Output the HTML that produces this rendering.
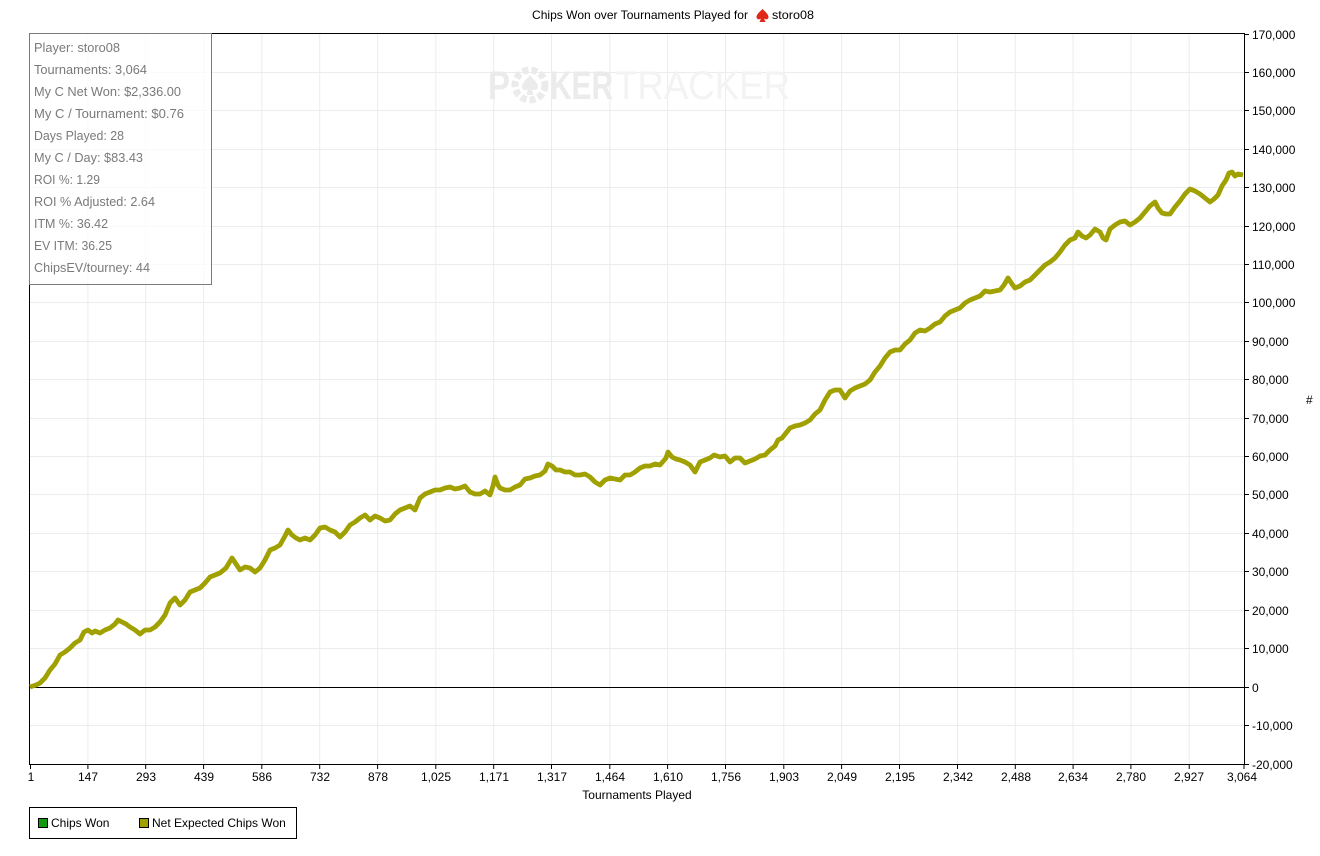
<!DOCTYPE html>
<html><head><meta charset="utf-8"><style>
html,body{margin:0;padding:0;background:#fff;}
svg{display:block;}
text{font-family:"Liberation Sans",Arial,sans-serif;}
.st{font-family:"Liberation Sans",sans-serif;font-size:12.5px;fill:#7a7a7a;}
</style></head><body>
<svg width="1320" height="856" viewBox="0 0 1320 856" xmlns="http://www.w3.org/2000/svg">
<rect width="1320" height="856" fill="#fff"/>
<text x="532" y="19" font-size="12" fill="#000" textLength="216" lengthAdjust="spacingAndGlyphs">Chips Won over Tournaments Played for</text>
<path d="M762.5 9 C759 12.5 756.5 14.5 756.5 17 C756.5 19.5 759 20 761 18.5 L759.5 22 L765.5 22 L764 18.5 C766 20 768.5 19.5 768.5 17 C768.5 14.5 766 12.5 762.5 9Z" fill="#e02818"/>
<text x="772" y="19" font-size="12" fill="#000" textLength="42" lengthAdjust="spacingAndGlyphs">storo08</text>
<g stroke="#ececec" stroke-width="1">
<path d="M87.9 34V764M145.7 34V764M203.6 34V764M261.8 34V764M319.7 34V764M377.6 34V764M435.8 34V764M493.7 34V764M551.5 34V764M609.8 34V764M667.6 34V764M725.5 34V764M783.8 34V764M841.6 34V764M899.5 34V764M957.5 34V764M1015.3 34V764M1073.1 34V764M1130.9 34V764M1189.2 34V764"/>
<path d="M30 725.5H1244M30 648.5H1244M30 610.5H1244M30 571.5H1244M30 533.5H1244M30 494.5H1244M30 456.5H1244M30 418.5H1244M30 379.5H1244M30 341.5H1244M30 302.5H1244M30 264.5H1244M30 226.5H1244M30 187.5H1244M30 149.5H1244M30 110.5H1244M30 72.5H1244"/>
</g>
<g fill="#ebebeb" font-size="40" font-weight="bold">
<text x="488" y="99" textLength="22" lengthAdjust="spacingAndGlyphs">P</text>
<circle cx="530" cy="85" r="15" fill="none" stroke="#ebebeb" stroke-width="7" stroke-dasharray="6 3"/>
<path d="M530 75 C526 80 522 83 522 87 C522 90 526 91 528 89 L526.5 95 L533.5 95 L532 89 C534 91 538 90 538 87 C538 83 534 80 530 75Z"/>
<text x="550" y="99" textLength="63" lengthAdjust="spacingAndGlyphs">KER</text>
<text x="615" y="99" font-weight="normal" fill="#f3f3f3" textLength="175" lengthAdjust="spacingAndGlyphs">TRACKER</text>
</g>
<path d="M30.5 33.5H1244.5V764" fill="none" stroke="#000" stroke-width="1"/>
<path d="M29.5 33V764.5H1244.5" fill="none" stroke="#000" stroke-width="1"/>
<path d="M30 687.5H1244" stroke="#000" stroke-width="1"/>
<g stroke="#000" stroke-width="1">
<path d="M1244 34.5h5M1244 72.5h5M1244 110.5h5M1244 149.5h5M1244 187.5h5M1244 226.5h5M1244 264.5h5M1244 302.5h5M1244 341.5h5M1244 379.5h5M1244 418.5h5M1244 456.5h5M1244 494.5h5M1244 533.5h5M1244 571.5h5M1244 610.5h5M1244 648.5h5M1244 687.5h5M1244 725.5h5M1244 764.5h5"/>
<path d="M30.5 764v5M87.9 764v5M145.7 764v5M203.6 764v5M261.8 764v5M319.7 764v5M377.6 764v5M435.8 764v5M493.7 764v5M551.5 764v5M609.8 764v5M667.6 764v5M725.5 764v5M783.8 764v5M841.6 764v5M899.5 764v5M957.5 764v5M1015.3 764v5M1073.1 764v5M1130.9 764v5M1189.2 764v5M1244 764v5"/>
</g>
<g font-size="12" fill="#000">
<text x="1252" y="39">170,000</text><text x="1252" y="77">160,000</text><text x="1252" y="115">150,000</text><text x="1252" y="154">140,000</text><text x="1252" y="192">130,000</text><text x="1252" y="231">120,000</text><text x="1252" y="269">110,000</text><text x="1252" y="307">100,000</text><text x="1252" y="346">90,000</text><text x="1252" y="384">80,000</text><text x="1252" y="423">70,000</text><text x="1252" y="461">60,000</text><text x="1252" y="499">50,000</text><text x="1252" y="538">40,000</text><text x="1252" y="576">30,000</text><text x="1252" y="615">20,000</text><text x="1252" y="653">10,000</text><text x="1252" y="692">0</text><text x="1252" y="730">-10,000</text><text x="1252" y="769">-20,000</text>
<text x="1306" y="404">#</text>
</g>
<g font-size="12" fill="#000" text-anchor="middle">
<text x="31" y="781">1</text><text x="88" y="781">147</text><text x="146" y="781">293</text><text x="204" y="781">439</text><text x="262" y="781">586</text><text x="320" y="781">732</text><text x="378" y="781">878</text><text x="436" y="781">1,025</text><text x="494" y="781">1,171</text><text x="552" y="781">1,317</text><text x="610" y="781">1,464</text><text x="668" y="781">1,610</text><text x="726" y="781">1,756</text><text x="784" y="781">1,903</text><text x="842" y="781">2,049</text><text x="900" y="781">2,195</text><text x="958" y="781">2,342</text><text x="1016" y="781">2,488</text><text x="1073" y="781">2,634</text><text x="1131" y="781">2,780</text><text x="1189" y="781">2,927</text><text x="1242" y="781">3,064</text>
<text x="637" y="799">Tournaments Played</text>
</g>
<polyline fill="none" stroke="#a0a000" stroke-width="4.8" stroke-linejoin="round" points="30,687 36,685 40,683 45,678 50,670 55,664 60,655 65,652 70,648 75,643 80,640 84,632 88,630 92,633 95,631 100,633 105,630 110,628 115,624 118,620 122,622 126,624 130,627 135,630 140,634 145,630 150,630 155,627 160,622 165,615 170,603 175,598 180,605 185,600 190,592 195,590 200,588 205,583 210,577 215,575 220,573 226,568 232,558 236,564 240,570 245,567 250,568 255,572 260,568 265,560 270,550 275,548 280,545 285,536 288,530 292,535 296,538 300,540 305,538 310,540 315,535 320,528 325,527 330,530 335,532 340,537 345,532 350,525 355,522 360,518 365,515 370,520 375,516 380,518 385,521 390,520 395,514 400,510 405,508 410,506 415,510 420,498 425,494 430,492 435,490 440,490 445,488 450,487 455,489 460,488 465,486 470,492 475,494 480,494 485,491 490,495 493,486 495,477 498,485 500,488 505,490 510,490 515,487 520,485 525,479 530,478 535,476 540,475 545,471 548,464 552,466 556,470 560,470 565,472 570,472 575,475 580,475 585,474 590,477 595,482 600,485 605,480 610,478 615,479 620,480 625,475 630,475 635,472 640,468 645,466 650,466 655,464 660,465 666,458 668,452 672,457 676,459 680,460 685,462 690,465 695,472 700,462 705,460 710,458 714,455 720,457 725,456 730,462 735,458 740,458 745,463 750,461 755,459 760,456 765,455 770,450 775,446 778,440 782,438 786,433 790,428 795,426 800,425 805,423 810,420 815,414 820,410 825,400 830,392 835,390 840,390 845,398 850,391 855,388 860,386 865,384 870,380 875,372 880,366 885,358 890,352 895,350 900,350 905,344 910,340 915,333 920,330 925,331 930,328 935,324 940,322 945,316 950,312 955,310 960,308 965,303 970,300 975,298 980,296 985,291 990,292 995,291 1000,290 1004,285 1008,278 1012,284 1015,288 1020,286 1025,282 1030,280 1035,275 1040,270 1045,265 1050,262 1055,258 1060,252 1065,245 1070,240 1075,238 1078,232 1082,236 1086,238 1090,235 1095,229 1100,232 1103,238 1106,240 1110,229 1115,225 1120,222 1125,221 1130,225 1135,222 1140,218 1145,212 1150,206 1155,202 1158,208 1162,213 1166,214 1170,214 1175,207 1180,201 1185,194 1190,189 1195,191 1200,194 1205,198 1210,202 1214,199 1218,195 1222,186 1226,180 1229,173 1232,172 1235,176 1238,174 1243,175"/>
<rect x="29.5" y="33.5" width="182" height="251" fill="#fff" fill-opacity="0.72" stroke="#7a7a7a" stroke-width="1"/>
<g class="st">
<text x="34" y="52" textLength="86" lengthAdjust="spacingAndGlyphs">Player: storo08</text>
<text x="34" y="74" textLength="113" lengthAdjust="spacingAndGlyphs">Tournaments: 3,064</text>
<text x="34" y="96" textLength="147" lengthAdjust="spacingAndGlyphs">My C Net Won: $2,336.00</text>
<text x="34" y="118" textLength="150" lengthAdjust="spacingAndGlyphs">My C / Tournament: $0.76</text>
<text x="34" y="140" textLength="90" lengthAdjust="spacingAndGlyphs">Days Played: 28</text>
<text x="34" y="162" textLength="109" lengthAdjust="spacingAndGlyphs">My C / Day: $83.43</text>
<text x="34" y="184" textLength="66" lengthAdjust="spacingAndGlyphs">ROI %: 1.29</text>
<text x="34" y="206" textLength="121" lengthAdjust="spacingAndGlyphs">ROI % Adjusted: 2.64</text>
<text x="34" y="228" textLength="74" lengthAdjust="spacingAndGlyphs">ITM %: 36.42</text>
<text x="34" y="250" textLength="78" lengthAdjust="spacingAndGlyphs">EV ITM: 36.25</text>
<text x="34" y="272" textLength="116" lengthAdjust="spacingAndGlyphs">ChipsEV/tourney: 44</text>
</g>
<rect x="29.5" y="807.5" width="267" height="31" fill="#fff" stroke="#000" stroke-width="1"/>
<rect x="38.5" y="818.5" width="9" height="9" fill="#119911" stroke="#000"/>
<text x="51" y="827" font-size="12" fill="#000">Chips Won</text>
<rect x="139.5" y="818.5" width="9" height="9" fill="#a0a000" stroke="#000"/>
<text x="152" y="827" font-size="12" fill="#000">Net Expected Chips Won</text>
</svg>
</body></html>
